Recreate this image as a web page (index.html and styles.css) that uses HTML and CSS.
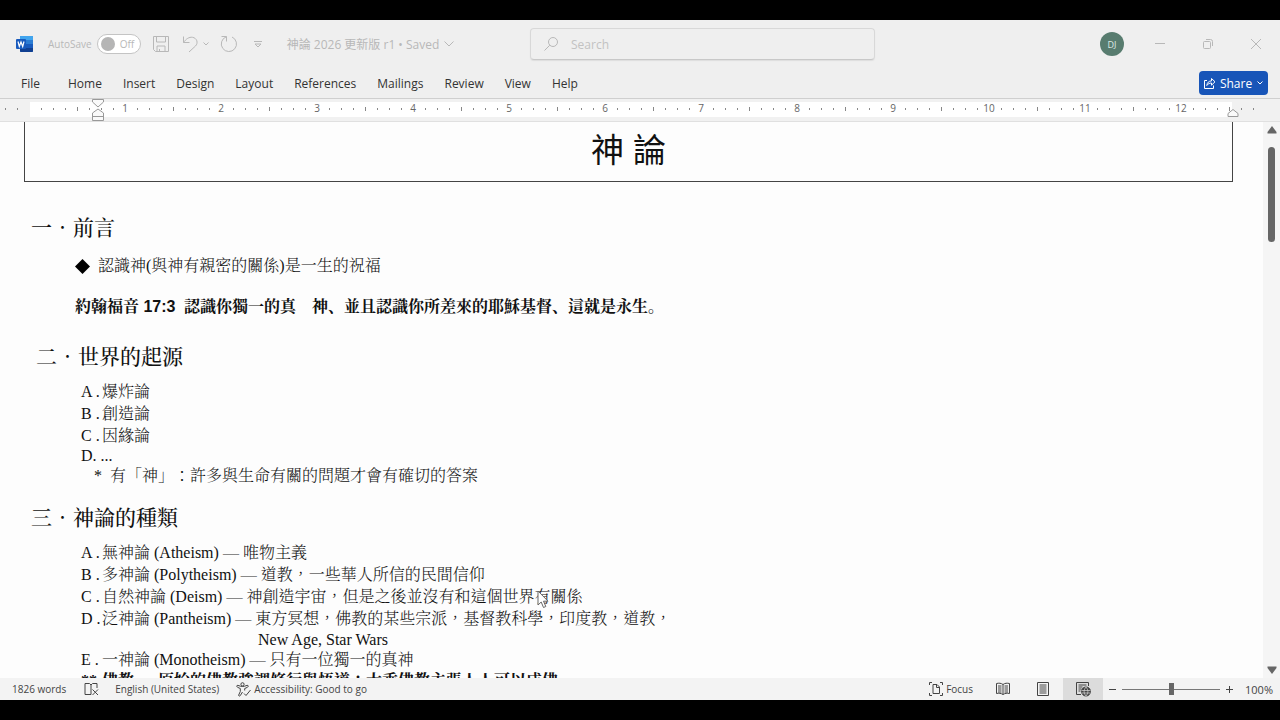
FILE: index.html
```html
<!DOCTYPE html>
<html lang="zh-Hant">
<head>
<meta charset="utf-8">
<title>神論 2026 更新版 r1</title>
<link rel="stylesheet" href="styles.css">
</head>
<body>
<div class="app">
  <header class="titlebar" lang="en">
    <div class="quick">
      <svg class="logo" width="18" height="18" viewBox="0 0 18 18" aria-hidden="true">
        <rect x="4" y="1" width="13" height="16" rx="1" fill="#2b7cd3"/>
        <path d="M4 2a1 1 0 0 1 1-1h11a1 1 0 0 1 1 1v3H4z" fill="#41a5ee"/>
        <path d="M4 9h13v4H4z" fill="#185abd"/>
        <path d="M4 13h13v3a1 1 0 0 1-1 1H5a1 1 0 0 1-1-1z" fill="#103f91"/>
        <rect x="0" y="4" width="10" height="10" rx="1" fill="#185abd"/>
        <path d="M2 6.500l1.300 5L5 7l1.700 4.500L8 6.500" fill="none" stroke="#fff" stroke-width="1.200"/>
      </svg>
      <label class="autosave"><span>AutoSave</span><span class="toggle"><input type="checkbox"><span>Off</span></span></label>
      <button class="plain save" aria-label="Save"><svg width="18" height="18" viewBox="0 0 18 18"><path d="M1.500 1.500h15v15h-13l-2-2zM4.500 1.500v5.500h9V1.500M5 16.500V11h8v5.500M7.500 14v2.500"/></svg></button>
      <button class="plain undo" aria-label="Undo"><svg width="17" height="18" viewBox="0 0 17 18"><path d="M1.500 1.500v6h6M1.500 7.500C4 4 7 1.800 10.500 2.300c4.500.7 6 5.700 3 8.700L7 17"/></svg></button>
      <button class="plain undo-more" aria-label="Undo options"><svg width="8" height="8" viewBox="0 0 8 8"><path d="M1.500 2.500L4 5l2.500-2.500"/></svg></button>
      <button class="plain redo" aria-label="Repeat"><svg width="18" height="18" viewBox="0 0 18 18"><path d="M1.500 1.500h5v5M6.300 1.800A7.600 7.600 0 1 0 12 2"/></svg></button>
      <button class="plain custom" aria-label="Customize"><svg width="10" height="10" viewBox="0 0 10 10"><path d="M1 2.500h8M2 5h6L5 8z"/></svg></button>
      <button class="plain filename">神論 2026 更新版 r1 • Saved<svg width="12" height="8" viewBox="0 0 12 8"><path d="M1.500 1.500L6 6l4.500-4.500"/></svg></button>
    </div>
    <label class="search">
      <svg width="16" height="16" viewBox="0 0 16 16"><circle cx="10" cy="6" r="4.500"/><path d="M6.800 9.200L1.500 14.500"/></svg>
      <input type="search" placeholder="Search" aria-label="Search">
    </label>
    <div class="window">
      <button class="avatar">DJ</button>
      <button class="plain" aria-label="Minimize"><svg width="12" height="12" viewBox="0 0 12 12"><path d="M1 5.500h10"/></svg></button>
      <button class="plain" aria-label="Restore"><svg width="12" height="12" viewBox="0 0 12 12"><rect x="1.500" y="3.500" width="7" height="7" rx="1"/><path d="M4 1.500h4.500a2 2 0 0 1 2 2V8"/></svg></button>
      <button class="plain" aria-label="Close"><svg width="12" height="12" viewBox="0 0 12 12"><path d="M1 1l10 10M11 1L1 11"/></svg></button>
    </div>
  </header>

  <nav class="tabs" lang="en">
    <button>File</button><button>Home</button><button>Insert</button><button>Design</button><button>Layout</button><button>References</button><button>Mailings</button><button>Review</button><button>View</button><button>Help</button>
    <button class="share"><svg width="13" height="13" viewBox="0 0 13 13"><path d="M4 3.500H1.500v8h9V8.500M3.800 8.500c.4-3 2-4.500 4.700-4.600V1.500l3.500 3.300-3.500 3.400V6C6.500 6 5 6.800 3.800 8.500z"/></svg>Share<svg width="8" height="8" viewBox="0 0 8 8"><path d="M1.500 2.500L4 5l2.500-2.500"/></svg></button>
  </nav>

  <div class="ruler" aria-hidden="true">
    <div class="ruler-page"></div>
    <svg class="ticks" width="1256" height="20">
      <defs><pattern id="inch" x="29" width="96" height="20" patternUnits="userSpaceOnUse">
        <path d="M12 9h1v2h-1zM24 9h1v2h-1zM36 9h1v2h-1zM48 8h1v4h-1zM60 9h1v2h-1zM72 9h1v2h-1zM84 9h1v2h-1z" fill="#888"/>
      </pattern></defs>
      <rect width="1256" height="20" fill="url(#inch)"/>
    </svg>
    <div class="inches"><span>1</span><span>2</span><span>3</span><span>4</span><span>5</span><span>6</span><span>7</span><span>8</span><span>9</span><span>10</span><span>11</span><span>12</span></div>
    <svg class="indent-left" width="12" height="24" viewBox="0 0 12 24"><path d="M.5 1.500h11V4L6 9 .5 4zM6 11l5.500 4v7.500H.5V15zM.5 18.500h11"/></svg>
    <svg class="indent-right" width="12" height="10" viewBox="0 0 12 10"><path d="M6 1.500l5 4v3H1v-3z"/></svg>
  </div>

  <div class="workspace">
    <main class="document">
      <div class="title-box"><h1>神 論</h1></div>
      <h2 class="intro">一．前言</h2>
      <p class="bullet"><svg width="15" height="15" viewBox="0 0 15 15"><path d="M7.500 0L15 7.500 7.500 15 0 7.500z"/></svg>認識神(與神有親密的關係)是一生的祝福</p>
      <p class="verse">約翰福音 17:3 <span>認識你獨一的真　神、並且認識你所差來的耶穌基督、這就是永生。</span></p>
      <h2 class="origin">二．世界的起源</h2>
      <ul class="list">
        <li><b>A .</b>爆炸論</li>
        <li><b>B .</b>創造論</li>
        <li><b>C .</b>因緣論</li>
        <li class="dots">D. ...</li>
        <li class="note"><b>*</b>有「神」：許多與生命有關的問題才會有確切的答案</li>
      </ul>
      <h2 class="kinds">三．神論的種類</h2>
      <ul class="list">
        <li><b>A .</b>無神論 (Atheism) <i>—</i> 唯物主義</li>
        <li><b>B .</b>多神論 (Polytheism) <i>—</i> 道教，一些華人所信的民間信仰</li>
        <li><b>C .</b>自然神論 (Deism) <i>—</i> 神創造宇宙，但是之後並沒有和這個世界有關係</li>
        <li><b>D .</b>泛神論 (Pantheism) <i>—</i> 東方冥想，佛教的某些宗派，基督教科學，印度教，道教，</li>
        <li class="continued">New Age, Star Wars</li>
        <li class="tight"><b>E .</b>一神論 (Monotheism) <i>—</i> 只有一位獨一的真神</li>
        <li class="strong"><b>**</b>佛教 — 原始的佛教強調修行與悟道；大乘佛教主張人人可以成佛</li>
      </ul>
      <svg class="pointer" width="12" height="19" viewBox="0 0 12 19" aria-hidden="true"><path d="M1 1v14l3.200-3 2.300 5.500 2.300-1-2.300-5.300H11z"/></svg>
    </main>
    <div class="scrollbar">
      <svg width="10" height="8" viewBox="0 0 10 8"><path d="M5 0l4.500 6v1.500h-9V6z"/></svg>
      <div class="thumb"></div>
      <svg class="down" width="10" height="8" viewBox="0 0 10 8"><path d="M.5.500h9V2L5 8 .5 2z"/></svg>
    </div>
  </div>

  <footer class="status" lang="en">
    <button class="words">1826 words</button>
    <button class="proof" aria-label="Proofing"><svg width="15" height="14" viewBox="0 0 15 14"><path d="M7 12.500H1v-11h4.500L7 3l1.500-1.500H13V6M7 3v9.500M8.500 7.500l5.500 5.500M14 7.500L8.500 13"/></svg></button>
    <button class="language">English (United States)</button>
    <button class="access"><svg width="16" height="15" viewBox="0 0 16 15"><circle cx="6.500" cy="2.300" r="1.600"/><path d="M1 3.500c-.5 1 0 1.500 1 2l2.300 1v3L2.700 13c-.3 1 .8 1.500 1.500.7L6.500 10M12 3.500c.5 1 0 1.500-1 2l-2.300 1v2M1 3.500C2 2.800 3.500 4.500 6.500 4.500S11 2.800 12 3.500M8 11.500l2 2L14.500 8"/></svg>Accessibility: Good to go</button>
    <button class="focus"><svg width="14" height="14" viewBox="0 0 14 14"><path d="M.5 3V.5H3M11 .5h2.500V3M13.500 11v2.500H11M3 13.500H.5V11M4 2.500h4L10.500 5v6.500H4zM7.500 2.500v3h3"/></svg>Focus</button>
    <button class="view" aria-label="Read mode"><svg width="14" height="14" viewBox="0 0 14 14"><path d="M7 2.500C5 1 3 1 .5 1.500v10c2.500-.5 4.500-.3 6.500 1 2-1.300 4-1.500 6.500-1v-10C11 1 9 1 7 2.500zM7 2.500v10M2 4h3.500M2 6h3.500M2 8h3.500M2 10h3.500M8.500 4H12M8.500 6H12M8.500 8H12M8.500 10H12"/></svg></button>
    <button class="view" aria-label="Print layout"><svg width="12" height="14" viewBox="0 0 12 14"><path d="M.5.500h11v13H.5zM2.500 3h7M2.500 5h7M2.500 7h7M2.500 9h7M2.500 11h7"/></svg></button>
    <button class="view active" aria-label="Web layout"><svg width="15" height="15" viewBox="0 0 15 15"><path d="M5 12.500H.5V.5h12V4M2.500 3h8M2.500 5h4M2.500 7h3M2.500 9h2"/><circle cx="10" cy="9.500" r="4.500" fill="#444"/><path d="M5.500 8.500h9M5.500 11h9M10 5c-2.500 3-2.500 6 0 9M10 5c2.500 3 2.500 6 0 9" stroke="#ddd" stroke-width=".7"/></svg></button>
    <button class="step" aria-label="Zoom out"><svg width="9" height="9" viewBox="0 0 9 9"><path d="M1 4.500h7"/></svg></button>
    <input class="zoom" type="range" min="0" max="200" value="100" aria-label="Zoom">
    <button class="step" aria-label="Zoom in"><svg width="9" height="9" viewBox="0 0 9 9"><path d="M1 4.500h7M4.500 1v7"/></svg></button>
    <button class="percent">100%</button>
  </footer>
</div>
</body>
</html>
```

FILE: styles.css
```css
* { box-sizing: border-box; }
body {
  margin: 0;
  background: #000;
  font-family: "Open Sans", "Noto Sans CJK TC", sans-serif;
}
button {
  display: flex;
  align-items: center;
  flex: none;
  margin: 0;
  padding: 0;
  border: 0;
  background: none;
  color: inherit;
  font: inherit;
  white-space: nowrap;
}
svg { display: block; flex: none; fill: none; stroke: currentColor; }
.app {
  display: flex;
  flex-direction: column;
  height: 100vh;
  padding: 20px 0;
}

/* Title bar */
.titlebar {
  display: grid;
  grid-template-columns: 53fr 35fr 40fr;
  align-items: center;
  height: 48px;
  flex: none;
  background: #efefef;
  color: #b8b8b8;
}
.quick { display: flex; align-items: center; padding-left: 16px; }
.logo { stroke: none; }
.autosave {
  display: flex;
  align-items: center;
  gap: 5px;
  margin-left: 14px;
  font-size: 10px;
}
.toggle {
  display: flex;
  align-items: center;
  gap: 5px;
  width: 44px;
  height: 20px;
  padding-left: 3px;
  border: 1px solid #c4c4c4;
  border-radius: 10px;
  background: #fff;
}
.toggle input {
  appearance: none;
  width: 14px;
  height: 14px;
  margin: 0;
  border-radius: 50%;
  background: #b5b5b5;
}
.save { margin-left: 11px; }
.undo { margin-left: 12px; }
.undo-more { margin-left: 3px; }
.redo { margin-left: 10px; }
.custom { margin-left: 15px; }
.filename { gap: 4px; margin-left: 24px; font-size: 12px; }
.search {
  display: flex;
  align-items: center;
  gap: 12px;
  height: 32px;
  margin-right: 5px;
  padding: 0 12px;
  border: 1px solid #d8d8d8;
  border-bottom-color: #c8c8c8;
  border-radius: 4px;
  box-shadow: 0 1px 1px #ddd;
}
.search input {
  flex: 1;
  min-width: 0;
  padding: 0;
  border: 0;
  outline: 0;
  background: none;
  font: 12px "Open Sans", sans-serif;
}
.search input::placeholder { color: #c2c2c2; }
.window {
  display: flex;
  align-items: center;
  justify-content: flex-end;
  gap: 36px;
  padding-right: 18px;
}
.avatar {
  justify-content: center;
  width: 24px;
  height: 24px;
  margin-right: -6px;
  border-radius: 50%;
  background: #587c6f;
  color: #dfe9e5;
  font-size: 9px;
}

/* Ribbon tabs */
.tabs {
  display: flex;
  align-items: center;
  gap: 21px;
  height: 30px;
  flex: none;
  padding: 0 12px 0 21px;
  background: #efefef;
  color: #333;
  font-size: 12px;
}
.tabs button:first-child { margin-right: 7px; }
.share {
  justify-content: space-between;
  width: 69px;
  height: 24px;
  margin-left: auto;
  padding: 0 4px;
  border-radius: 4px;
  background: #1855b8;
  color: #fff;
}

/* Ruler */
.ruler {
  position: relative;
  height: 24px;
  flex: none;
  padding: 3px 0;
  border-top: 1px solid #cfcfcf;
  border-bottom: 1px solid #e0e0e0;
  background: #f1f1f1;
  color: #666;
  overflow: hidden;
}
.ruler-page { height: 15px; margin: 0 48px 0 30px; background: #fff; }
.ticks { position: absolute; left: 0; top: 0; stroke: none; }
.inches {
  position: absolute;
  left: 77px;
  top: 1px;
  display: flex;
  font-size: 10px;
  line-height: 16px;
}
.inches span { width: 96px; text-align: center; }
.indent-left, .indent-right { position: absolute; stroke: #999; fill: #fafafa; }
.indent-left { left: 92px; top: -1px; }
.indent-right { right: 41px; top: 9px; }

/* Document */
.workspace { display: flex; flex: 1; min-height: 0; background: #fdfdfd; }
.document {
  position: relative;
  flex: 1;
  min-width: 0;
  overflow: hidden;
  color: #111;
  font: 16px/22px "Liberation Serif", "Noto Serif CJK TC", "Noto Sans CJK TC", serif;
  font-weight: 300;
  text-spacing-trim: space-all;
}
.title-box {
  height: 60px;
  margin: 0 30px 0 24px;
  border: 1px solid #444;
  border-top: 0;
}
h1 {
  margin: 0;
  font: 400 33px/58px "Liberation Sans", "Noto Sans CJK TC", sans-serif;
  text-align: center;
}
h2 { margin: 0; font-size: 21px; font-weight: 500; line-height: 30px; }
.intro { padding: 31px 0 0 31px; }
.origin { padding: 24px 0 0 36px; }
.kinds { padding: 16px 0 0 31px; }
.bullet {
  display: flex;
  align-items: center;
  gap: 8px;
  margin: 12px 0 0 75px;
}
.bullet svg { fill: #000; stroke: none; }
.verse {
  margin: 19px 0 0 75px;
  font-family: "Liberation Sans", "Noto Serif CJK JP", "Noto Sans CJK JP", sans-serif;
  font-weight: 700;
  font-feature-settings: "locl" 0;
}
.verse span { margin-left: 4px; }
.list { margin: 9px 0 0; padding: 0 0 0 81px; list-style: none; white-space: nowrap; }
.list b {
  display: inline-block;
  width: 21px;
  font-weight: 300;
}
.list i { color: #888; font-style: normal; }
.list .dots { line-height: 18px; }
.list .note { padding-left: 13px; }
.list .note b { width: 16px; }
.list .continued { padding-left: 177px; line-height: 20px; }
.list .tight { line-height: 20px; }
.list .strong, .list .strong b { font-weight: 700; }
.pointer { position: absolute; left: 537px; top: 468px; fill: #fff; stroke: #666; }
.scrollbar {
  display: flex;
  flex-direction: column;
  align-items: center;
  width: 17px;
  flex: none;
  padding: 4px 0;
  background: #f5f5f5;
}
.scrollbar svg { fill: #666; stroke: none; }
.thumb { width: 7px; height: 95px; margin-top: 13px; border-radius: 4px; background: #666; }
.down { margin-top: auto; }

/* Status bar */
.status {
  display: flex;
  align-items: center;
  height: 22px;
  flex: none;
  padding: 0 7px 0 12px;
  background: #f3f3f3;
  color: #444;
  font-size: 10px;
}
.proof { margin-left: 18px; }
.language { margin-left: 16px; }
.access { gap: 2px; margin-left: 17px; }
.focus { gap: 3px; margin-left: auto; margin-right: 10px; }
.view { justify-content: center; width: 40px; height: 22px; }
.view.active { background: #dcdcdc; }
.step { margin: 0 5px; }
.zoom {
  appearance: none;
  width: 98px;
  height: 12px;
  margin: 0;
  background: linear-gradient(#777, #777) center / 100% 1px no-repeat;
}
.zoom::-webkit-slider-thumb {
  appearance: none;
  width: 5px;
  height: 12px;
  background: #666;
}
.percent { margin-left: 6px; font-size: 11px; }
```
